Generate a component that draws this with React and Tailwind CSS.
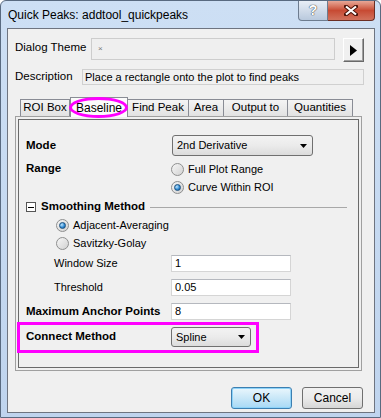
import React from 'react';

const Radio = ({ checked, label }) => (
  <div className="flex items-center h-[18px]">
    <span className="w-[13px] h-[13px] rounded-full border border-[#8e8f8f] bg-linear-to-br from-[#f6f6f6] to-[#d2d2d2] flex items-center justify-center">
      {checked && (
        <span className="w-[7px] h-[7px] rounded-full border border-[#1c5180] bg-[radial-gradient(circle_at_35%_35%,#bfe6ff,#2a86d0_60%,#17508a)]" />
      )}
    </span>
    <span className="ml-[4px]">{label}</span>
  </div>
);

const Arrow = () => (
  <svg width="7" height="4" viewBox="0 0 7 4">
    <path d="M0 0H7L3.5 4Z" fill="#000" />
  </svg>
);

const Field = ({ value }) => (
  <div className="w-[120px] h-[17px] bg-white border border-[#d5d5d5] border-t-[#b5b8be] flex items-center pl-[3px] text-[11px]">
    {value}
  </div>
);

const tabs = [
  { name: 'ROI Box', w: 'w-[50px]' },
  { name: 'Baseline', w: 'w-[58px]', active: true },
  { name: 'Find Peak', w: 'w-[62px]' },
  { name: 'Area', w: 'w-[36px]' },
  { name: 'Output to', w: 'w-[65px]' },
  { name: 'Quantities', w: 'w-[66px]' },
];

export default function App() {
  return (
    <div className="w-[381px] h-[418px] border border-[#596a80] rounded-t-[6px] bg-linear-to-b from-[#cddff4] to-[#bfd4ee] flex flex-col font-['Liberation_Sans',Arial,sans-serif] text-[11px] text-black overflow-hidden">
      {/* Title bar */}
      <div className="h-[27px] flex items-start justify-between">
        <div className="pl-[7px] pt-[7px] text-[12px] leading-[14px] text-black">Quick Peaks: addtool_quickpeaks</div>
        <div className="flex mr-[5px]">
          <div className="w-[30px] h-[20px] border border-[#6d7c8f] border-t-0 rounded-bl-[4px] bg-linear-to-b from-[#e8eef6] to-[#b9c9dd] flex items-center justify-center text-[14px] font-bold text-white [text-shadow:0_0_1px_#333,0_0_1px_#333]">
            ?
          </div>
          <div className="w-[47px] h-[20px] border border-[#6b2e24] border-t-0 border-l-0 rounded-br-[4px] bg-linear-to-b from-[#e7a797] via-[#c74a33] to-[#d1715c] flex items-center justify-center">
            <svg width="14" height="11" viewBox="0 0 14 11">
              <path d="M2 1.5L12 9.5M12 1.5L2 9.5" stroke="#4a1208" strokeWidth="4" strokeLinecap="square" />
              <path d="M2 1.5L12 9.5M12 1.5L2 9.5" stroke="#fff" strokeWidth="2.2" />
            </svg>
          </div>
        </div>
      </div>

      {/* Client area */}
      <div className="ml-[6px] mr-[5px] h-[385px] border border-[#6e7480] bg-[#f0f0f0] flex flex-col px-[7px]">
        {/* Dialog theme row */}
        <div className="mt-[9px] h-[24px] flex items-start">
          <div className="w-[76px] pt-[2px] text-[11.5px] leading-[14px]">Dialog Theme</div>
          <div className="w-[244px] h-[22px] border border-[#cdcdcd] bg-[#efefef] flex items-center pl-[6px] text-[8px] text-[#777]">
            ×
          </div>
          <div className="ml-[8px] w-[21px] h-[24px] border border-t-white border-l-white border-r-[#696969] border-b-[#696969] bg-[#f0f0f0] flex items-center justify-center shadow-[inset_-1px_-1px_0_#a0a0a0]">
            <svg width="7" height="11" viewBox="0 0 7 11">
              <path d="M0 0L7 5.5L0 11Z" fill="#000" />
            </svg>
          </div>
        </div>

        {/* Description row */}
        <div className="mt-[7px] h-[16px] flex items-center">
          <div className="w-[67px] text-[11.5px]">Description</div>
          <div className="w-[282px] h-[16px] border border-[#d0d0d0] bg-[#f0f0f0] flex items-center pl-[2px] text-[11px]">
            Place a rectangle onto the plot to find peaks
          </div>
        </div>

        {/* Tabs */}
        <div className="mt-[12px] h-[19px] flex items-end pl-[5px] relative">
          {tabs.map((t) =>
            t.active ? (
              <div
                key={t.name}
                className={`${t.w} h-[20px] -mb-[1px] relative z-10 border border-b-0 border-[#898c95] bg-[#fbfbfb] flex items-center justify-center text-[12px]`}
              >
                {t.name}
              </div>
            ) : (
              <div
                key={t.name}
                className={`${t.w} h-[17px] border border-b-0 border-[#898c95] -ml-px first:ml-0 bg-linear-to-b from-[#f4f4f4] to-[#e2e2e2] flex items-center justify-center text-[11.5px]`}
              >
                {t.name}
              </div>
            )
          )}
          <div className="absolute left-[54px] top-0 w-[59px] h-[21px] border-[3px] border-[#ff00ff] rounded-[50%] z-20" />
        </div>

        {/* Tab page */}
        <div className="w-[347px] h-[255px] border border-[#a0a0a0] bg-[#f0f0f0] p-[2px] relative">
          <div className="h-full border border-[#6a6a6a] flex flex-col">
            {/* Mode */}
            <div className="mt-[15px] h-[21px] flex items-center pl-[7px]">
              <div className="w-[146px] font-bold text-[11.5px]">Mode</div>
              <div className="w-[141px] h-[21px] rounded-[3px] border border-[#707070] bg-linear-to-b from-[#f3f3f3] via-[#ebebeb] to-[#dcdcdc] flex items-center justify-between pl-[4px] pr-[5px] text-[11px]">
                <span>2nd Derivative</span>
                <Arrow />
              </div>
            </div>

            {/* Range */}
            <div className="mt-[4px] flex pl-[7px]">
              <div className="w-[145px] h-[18px] flex items-center font-bold text-[11.5px]">Range</div>
              <div className="flex flex-col">
                <Radio label="Full Plot Range" />
                <Radio label="Curve Within ROI" checked />
              </div>
            </div>

            {/* Smoothing header */}
            <div className="mt-[2px] h-[18px] flex items-center pl-[7px]">
              <span className="w-[10px] h-[10px] border border-[#555] bg-white flex items-center justify-center">
                <span className="w-[6px] h-px bg-black" />
              </span>
              <span className="ml-[5px] font-bold text-[11.5px]">Smoothing Method</span>
              <span className="ml-[5px] w-[197px] h-px bg-[#a8a8a8]" />
            </div>

            <div className="pl-[37px] flex flex-col">
              <Radio label="Adjacent-Averaging" checked />
              <Radio label="Savitzky-Golay" />
            </div>

            {/* Window size */}
            <div className="mt-[3px] h-[17px] flex items-center pl-[35px]">
              <div className="w-[117px]">Window Size</div>
              <Field value="1" />
            </div>

            {/* Threshold */}
            <div className="mt-[7px] h-[17px] flex items-center pl-[35px]">
              <div className="w-[117px]">Threshold</div>
              <Field value="0.05" />
            </div>

            {/* Max anchor */}
            <div className="mt-[7px] h-[17px] flex items-center pl-[7px]">
              <div className="w-[145px] font-bold text-[11.5px]">Maximum Anchor Points</div>
              <Field value="8" />
            </div>

            {/* Connect method */}
            <div className="mt-[7px] h-[20px] flex items-center pl-[7px]">
              <div className="w-[145px] font-bold text-[11.5px]">Connect Method</div>
              <div className="w-[80px] h-[20px] rounded-[3px] border border-[#707070] bg-linear-to-b from-[#f3f3f3] via-[#ebebeb] to-[#dcdcdc] flex items-center justify-between pl-[4px] pr-[5px] text-[11px]">
                <span>Spline</span>
                <Arrow />
              </div>
            </div>
          </div>
          <div className="absolute left-[1px] top-[205px] w-[242px] h-[31px] border-[3px] border-[#ff00ff]" />
        </div>

        {/* Buttons */}
        <div className="mt-[16px] flex justify-end pr-[4px] gap-[10px]">
          <div className="w-[61px] h-[22px] rounded-[3px] border border-[#3c7fb1] bg-linear-to-b from-[#eaf6fd] via-[#c9e7f8] to-[#a7d9f5] shadow-[inset_0_0_0_1px_#8ed3f9] flex items-center justify-center text-[12px]">
            OK
          </div>
          <div className="w-[61px] h-[22px] rounded-[3px] border border-[#707070] bg-linear-to-b from-[#f2f2f2] via-[#ebebeb] to-[#d6d6d6] flex items-center justify-center text-[12px]">
            Cancel
          </div>
        </div>
      </div>
    </div>
  );
}
